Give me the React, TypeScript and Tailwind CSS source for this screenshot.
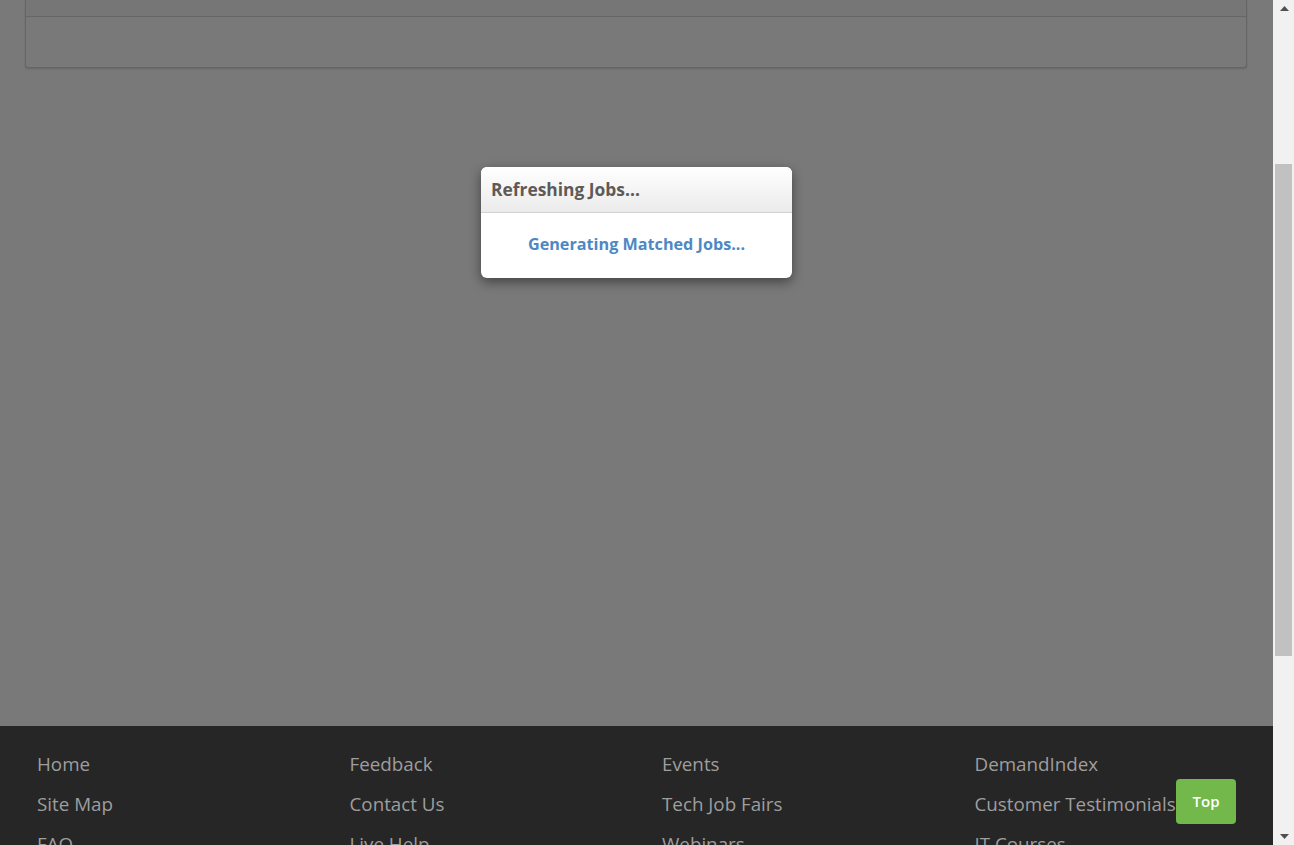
const footerColumns = [
  ['Home', 'Site Map', 'FAQ'],
  ['Feedback', 'Contact Us', 'Live Help'],
  ['Events', 'Tech Job Fairs', 'Webinars'],
  ['DemandIndex', 'Customer Testimonials', 'IT Courses'],
];

export default function App() {
  return (
    <div className="flex h-[845px] w-[1294px] overflow-hidden font-['Open_Sans','Liberation_Sans',sans-serif]">
      <div className="relative flex min-w-0 flex-1 flex-col">
        {/* dimmed page content */}
        <div className="h-[726px] shrink-0 bg-[#797979] px-[25px]">
          <div className="w-[1222px] rounded-b-[3px] border-x border-b border-[#666] bg-[#797979] shadow-[0_1px_2px_rgba(0,0,0,0.15)]">
            <div className="h-[17px] border-b border-[#666] bg-[#767676]" />
            <div className="h-[50px]" />
          </div>

          <div className="mt-[99px] ml-[456px] w-[311px] overflow-hidden rounded-[6px] bg-white shadow-[0_4px_12px_rgba(0,0,0,0.45)]">
            <div className="flex h-[46px] items-center border-b border-[#d2d2d2] bg-gradient-to-b from-white to-[#ebebeb] px-[10px]">
              <span className="text-[17.4px] font-bold text-[#5e5a58]">Refreshing Jobs...</span>
            </div>
            <div className="flex h-[65px] items-center justify-center pb-[2px]">
              <span className="text-[16.2px] font-bold text-[#4d88c4]">Generating Matched Jobs...</span>
            </div>
          </div>
        </div>

        {/* footer */}
        <div className="flex-1 bg-[#262626] pl-[22px] pr-[1px] pt-[24px]">
          <div className="grid grid-cols-4">
            {footerColumns.map((col) => (
              <div key={col[0]} className="flex flex-col px-[15px]">
                {col.map((link) => (
                  <span key={link} className="h-[40px] whitespace-nowrap text-[18.8px] leading-[28px] text-[#9e9e9e]">
                    {link}
                  </span>
                ))}
              </div>
            ))}
          </div>
        </div>

        <button className="absolute left-[1176px] top-[779px] flex h-[45px] w-[60px] items-center justify-center rounded-[4px] bg-[#72b84a] text-[15px] font-semibold text-white">
          Top
        </button>
      </div>

      {/* scrollbar */}
      <div className="flex w-[21px] shrink-0 flex-col bg-[#f1f1f1]">
        <div className="flex h-[17px] items-center justify-center pl-[1px]">
          <svg width="9" height="5" viewBox="0 0 9 5"><path d="M0 5 L4.5 0 L9 5 Z" fill="#505050" /></svg>
        </div>
        <div className="mt-[147px] ml-[2px] h-[492px] w-[17px] bg-[#c1c1c1]" />
        <div className="flex-1" />
        <div className="flex h-[17px] items-center justify-center pl-[1px]">
          <svg width="9" height="5" viewBox="0 0 9 5"><path d="M0 0 L9 0 L4.5 5 Z" fill="#505050" /></svg>
        </div>
      </div>
    </div>
  );
}
